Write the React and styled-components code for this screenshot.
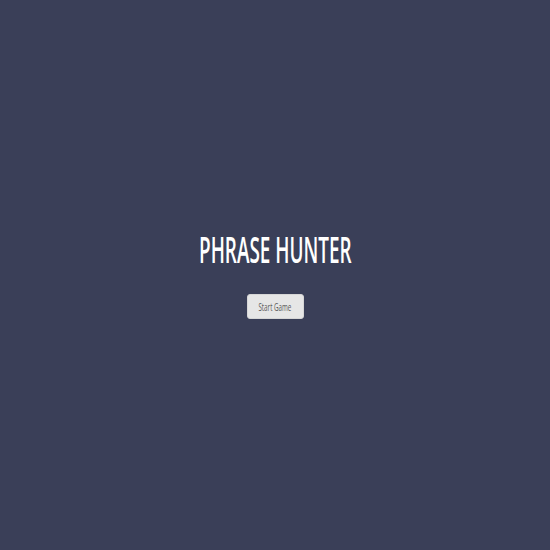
import React from 'react';
import styled, { createGlobalStyle } from 'styled-components';

const GlobalStyle = createGlobalStyle`
  html, body {
    margin: 0;
    padding: 0;
    background-color: #3a3f58;
  }
  body {
    font-family: "Open Sans", "Liberation Sans", Arial, sans-serif;
  }
`;

const Overlay = styled.div`
  display: flex;
  flex-direction: column;
  align-items: center;
  justify-content: center;
  height: 100vh;
  background-color: #3a3f58;
`;

const Title = styled.h2`
  margin: 0 0 26px;
  color: #ffffff;
  font-family: "Open Sans", "Liberation Sans", Arial, sans-serif;
  font-size: 36px;
  font-weight: 600;
  line-height: 36px;
  white-space: nowrap;
  transform: scaleX(${props => props.squeeze});
`;

const ResetButton = styled.button`
  display: flex;
  align-items: center;
  justify-content: center;
  width: 57px;
  height: 25px;
  padding: 0;
  border: 1px solid #d6d6d6;
  border-radius: 3px;
  background-color: #e6e6e6;
  cursor: pointer;
`;

const ButtonLabel = styled.span`
  display: inline-block;
  color: #5a5a5a;
  font-family: "Open Sans", "Liberation Sans", Arial, sans-serif;
  font-size: 11px;
  font-weight: 400;
  white-space: nowrap;
  transform: scaleX(0.57);
`;

export default function App() {
  return (
    <>
      <GlobalStyle />
      <Overlay>
        <Title squeeze={0.525}>PHRASE HUNTER</Title>
        <ResetButton>
          <ButtonLabel>Start Game</ButtonLabel>
        </ResetButton>
      </Overlay>
    </>
  );
}
